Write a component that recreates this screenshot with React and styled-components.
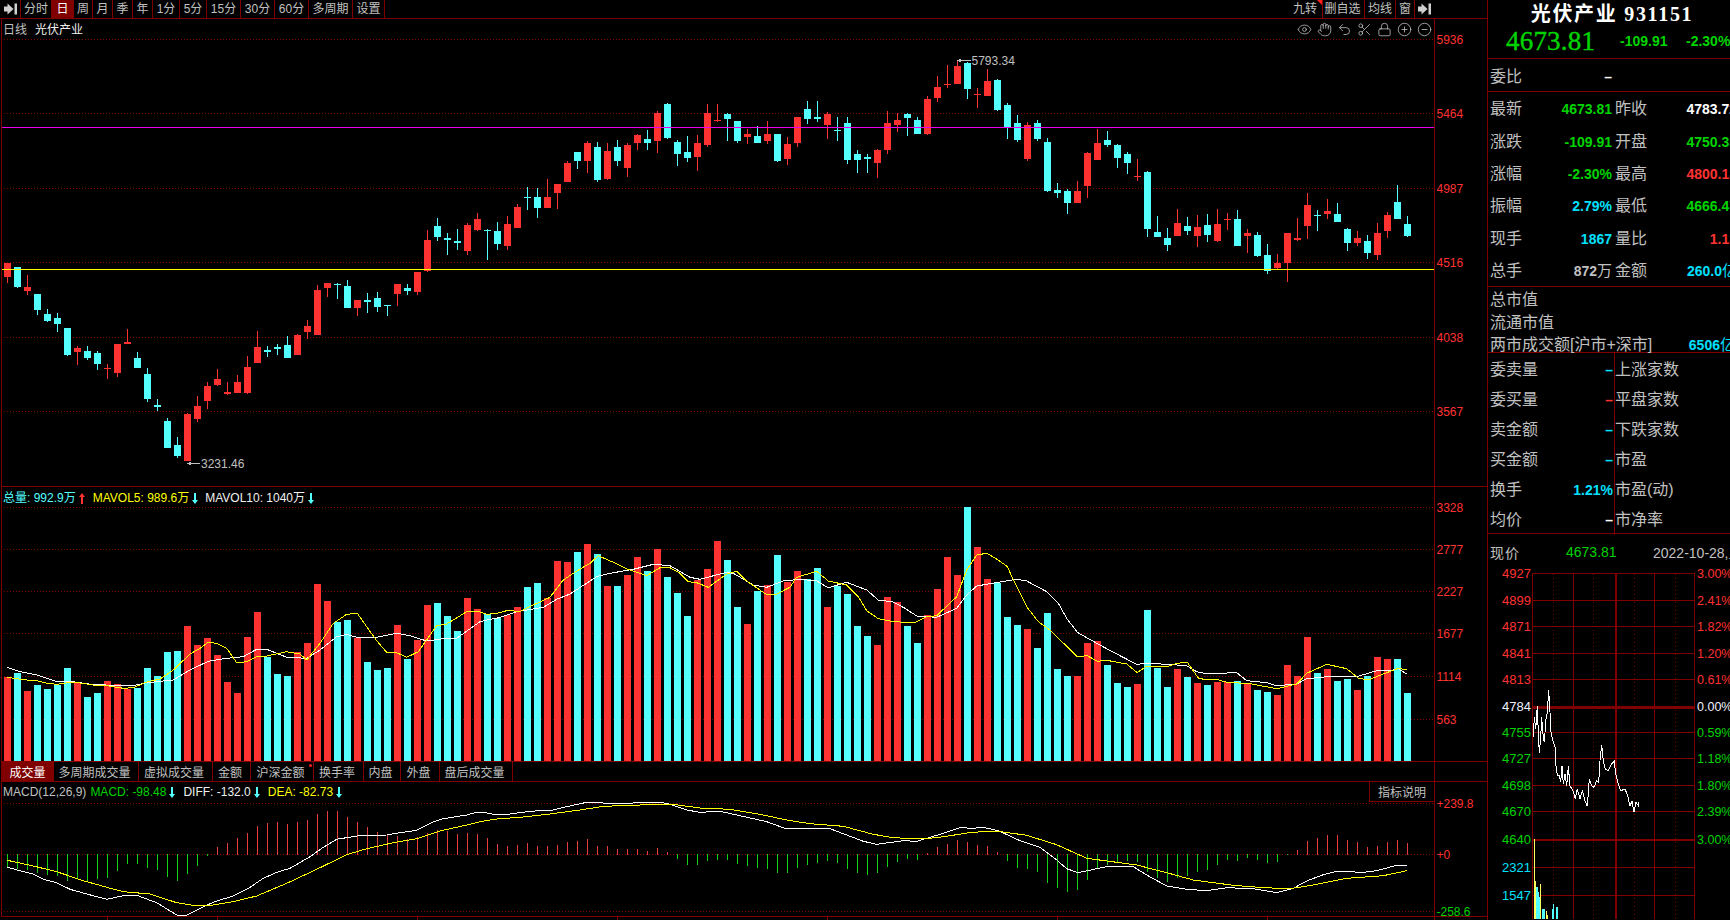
import React from 'react';
import styled, { createGlobalStyle } from 'styled-components';
import { Eye, Hand, Undo2, Scissors, Lock, CirclePlus, CircleMinus } from 'lucide-react';

const FONT = '"Liberation Sans", "Noto Sans CJK SC", sans-serif';
const LINE = '#800000';
const RED = '#ff3232';
const CYAN = '#54ffff';
const GREEN = '#00d400';
const BLUE = '#00e0ff';
const GRAY = '#c0c0c0';

const GlobalStyle = createGlobalStyle`
  html, body { margin: 0; padding: 0; background: #000; overflow: hidden; }
  #root { width: 1730px; height: 920px; }
`;

const Page = styled.div`
  width: 1730px; height: 920px; display: flex; overflow: hidden;
  background: #000; color: ${GRAY}; font-family: ${FONT};
`;
const LeftColumn = styled.div`
  width: 1488px; flex: none; display: flex; flex-direction: column;
  border-right: 1px solid ${LINE}; box-sizing: border-box;
`;
const Toolbar = styled.div`
  height: 19px; flex: none; box-sizing: border-box; display: flex;
  border-bottom: 1px solid ${LINE}; padding-right: 53px;
`;
const ToolGroup = styled.div`display: flex; height: 18px;`;
const ToolSpacer = styled.div`flex: 1;`;
const ToolCell = styled.div`
  position: relative; box-sizing: border-box; width: ${p => p.$w}px; height: 18px; flex: none;
  display: flex; align-items: center; justify-content: center;
  font-size: 12px; line-height: 18px; white-space: nowrap;
  padding-right: ${p => p.$pr || 0}px;
  color: ${p => (p.$active ? '#fff' : GRAY)};
  background: ${p => (p.$active ? LINE : 'transparent')};
  border-right: ${p => (p.$last ? 'none' : `1px solid ${LINE}`)};
`;
const CornerMark = styled.span`
  position: absolute; right: 0; top: 0; width: 0; height: 0;
  border-top: 5px solid #ff2020; border-left: 5px solid transparent;
`;
const Pane = styled.div`
  position: relative; flex: none; height: ${p => p.$h}px; margin-left: 1px;
  border-left: 1px solid ${LINE}; border-bottom: 1px solid ${LINE};
`;
const ChartSvg = styled.svg`display: block; font-family: ${FONT};`;
const AxisText = styled.text`
  font-size: ${p => p.$size || 12}px; fill: ${p => p.$color || RED};
`;
const KlineTitle = styled.div`
  position: absolute; left: 1px; top: 4px; display: flex; gap: 8px;
  font-size: 12px; line-height: 14px;
`;
const TitleName = styled.span`color: #f0f0f0;`;
const IconRow = styled.div`
  position: absolute; right: 53px; top: 3px; display: flex; color: #c4c4c4;
`;
const IconBox = styled.div`
  width: 20px; height: 14px; display: flex; align-items: center; justify-content: center;
`;
const Legend = styled.div`
  position: absolute; left: 1px; top: ${p => p.$top}px; display: flex; align-items: center;
  font-size: 12px; line-height: 14px; white-space: nowrap;
`;
const LegendItem = styled.span`
  color: ${p => p.$color}; display: inline-flex; align-items: center;
  margin-left: ${p => p.$gap || 0}px;
`;
const TrendSvg = styled.svg`margin-left: 3px; flex: none;`;
const TabRow = styled.div`
  height: 20px; flex: none; box-sizing: border-box; display: flex; margin-left: 1px;
  border-left: 1px solid ${LINE}; border-bottom: 1px solid ${LINE};
`;
const Tab = styled.div`
  position: relative; box-sizing: border-box; flex: none; width: ${p => p.$w}px; height: 19px;
  display: flex; align-items: center; justify-content: center; font-size: 12px;
  padding-right: ${p => (p.$active ? 0 : 3)}px;
  color: ${p => (p.$active ? '#fff' : GRAY)};
  background: ${p => (p.$active ? LINE : 'transparent')};
  border-right: 1px solid ${LINE};
`;
const TabDot = styled.span`
  position: absolute; right: 1px; top: 2px; width: 3px; height: 3px; border-radius: 50%; background: #ff2020;
`;
const TabSpacer = styled.div`flex: 1;`;
const AxisStub = styled.div`width: 52px; flex: none; border-left: 1px solid ${LINE};`;
const HelpBox = styled.div`
  position: absolute; right: 52px; top: 0; width: 66px; height: 20px; box-sizing: border-box;
  display: flex; align-items: center; justify-content: center; font-size: 12px;
  border-left: 1px solid ${LINE}; border-bottom: 1px solid ${LINE}; border-right: 1px solid ${LINE}; background: #000;
`;
const TimeAxis = styled.div`height: 3px; flex: none;`;

const RightPanel = styled.div`
  width: 242px; flex: none; display: flex; flex-direction: column; overflow: hidden;
`;
const TitleBlock = styled.div`
  height: 59px; flex: none; box-sizing: border-box; border-bottom: 1px solid ${LINE};
`;
const StockName = styled.div`
  height: 24px; padding-left: 6px; box-sizing: border-box;
  display: flex; justify-content: center; align-items: center; white-space: pre;
  font-family: "Liberation Serif", "Noto Sans CJK SC", serif; font-weight: 700;
  font-size: 20px; letter-spacing: 1.7px; color: #fff;
`;
const QuoteLine = styled.div`
  display: flex; align-items: center; height: 34px; padding-left: 18px; color: ${GREEN};
`;
const BigPrice = styled.span`
  width: 114px; flex: none; font-family: "Liberation Serif", serif; font-size: 27px; letter-spacing: 0.2px;
  -webkit-text-stroke: 0.4px ${GREEN};
`;
const Change = styled.span`
  width: 66px; flex: none; font-size: 14px; font-weight: 700; white-space: nowrap;
`;
const Section = styled.div`
  height: ${p => p.$h}px; flex: none; box-sizing: border-box; border-bottom: 1px solid ${LINE};
  padding-top: ${p => p.$pt || 0}px;
`;
const SplitRow = styled.div`
  display: grid; grid-template-columns: 122px 122px; column-gap: 3px; padding-left: 2px;
  height: ${p => p.$h}px; align-items: center; width: 260px;
`;
const Half = styled.div`display: flex; justify-content: space-between; align-items: center;`;
const Label = styled.span`
  font-size: 16px; line-height: 20px; color: ${GRAY}; white-space: nowrap;
`;
const Value = styled.span`
  font-size: 14px; line-height: 20px; font-weight: 700; color: ${p => p.$color}; white-space: nowrap;
`;
const Unit = styled.span`font-weight: 400; font-size: 15px;`;
const MiscRow = styled.div`
  height: 22.4px; display: flex; align-items: center; justify-content: space-between;
  padding-left: 2px; width: 247px; box-sizing: border-box;
`;
const LowerGrid = styled.div`display: grid; grid-template-columns: 127px 1fr; height: 100%;`;
const LowerCol = styled.div`
  box-sizing: border-box; border-right: ${p => (p.$left ? `1px solid ${LINE}` : 'none')};
  padding: ${p => (p.$left ? '2px 1px 0 2px' : '2px 0 0 0')};
  display: grid; grid-auto-rows: 30px; align-items: center;
`;
const LowerGridFrame = styled(LowerGrid)`height: 180px;`;
const LowerRow = styled.div`display: flex; justify-content: space-between; align-items: center;`;
const Summary = styled.div`
  height: 35px; flex: none; display: flex; align-items: center; white-space: nowrap; font-size: 14px;
  padding-left: 2px;
`;
const SummaryLabel = styled.span`width: 76px; flex: none; letter-spacing: 1px; font-size: 14px;`;
const SummaryPrice = styled.span`width: 87px; flex: none; color: ${GREEN};`;
const SummaryDate = styled.span`color: ${GRAY};`;

/* ---------- data (read off the picture: [colour, body top, body bottom, wick top, wick bottom]) ---------- */
const seg = (off, rows) => rows.map(([c, a, b, d, e]) => ({ c, t: off + a / 3, b: off + b / 3, wt: off + d / 3, wb: off + e / 3 }));
const CANDLES = [
  ...seg(250, [
    ['r',39,81,39,99],['c',51,111,51,114],['r',111,123,75,135],['c',132,180,132,195],['c',192,213,177,216],['c',204,222,189,246],
    ['c',234,315,234,318],['r',294,306,288,345],['c',303,324,288,330],['c',309,342,303,360],['r',354,357,342,387],['r',282,369,282,381],
    ['r',276,282,237,282],['c',324,354,306,354],['c',372,447,354,456],['c',465,471,447,483],['c',513,594,504,594],['c',585,618,561,624],
    ['r',492,633,489,633],['r',468,507,438,516],['r',408,453,396,477],['r',387,405,357,408],['r',426,432,396,435],['r',396,429,375,429],
    ['r',351,429,318,432],['r',291,339,243,339],['c',300,306,288,321],['c',291,297,282,315],['c',285,324,258,324],['r',255,315,252,315],
    ['r',228,246,210,267],['r',120,255,105,255],['r',99,114,99,141],['c',102,105,100,147],['c',108,174,90,174],['r',150,174,150,198],
    ['c',150,156,129,189],['c',144,171,126,186],['c',165,168,165,198],['r',102,132,102,168],['c',114,123,102,135],['r',66,126,66,135],
  ]),
  ...seg(0, [
    ['r',720,813,690,816],['c',678,711,654,723],['c',714,720,699,765],['c',723,729,687,750],['r',675,753,669,765],['r',657,690,639,693],
    ['c',690,693,687,780],['c',693,732,666,750],
  ]),
  ...seg(40, [
    ['r',552,618,528,630],['r',501,564,492,564],['c',471,474,441,510],['c',471,504,444,534],['r',471,504,417,504],['r',432,459,432,507],
    ['r',369,426,363,426],['c',336,363,336,387],['r',309,363,303,399],['c',321,420,306,426],['r',333,417,309,420],['c',321,363,300,378],
    ['r',315,384,309,411],['r',285,309,282,330],['c',297,309,270,330],['r',219,303,213,339],['c',192,294,189,297],['c',306,342,300,378],
    ['c',336,354,288,366],['r',309,351,285,393],['r',219,315,192,321],['r',240,243,192,246],['c',222,237,219,303],['c',243,303,243,309],
    ['r',282,291,267,312],['c',288,309,258,309],['r',282,303,243,312],['c',282,363,282,366],['r',312,357,291,375],['r',231,309,231,321],
    ['c',207,237,183,252],['c',231,237,183,246],['r',222,255,216,297],['c',270,273,231,303],['c',249,360,231,372],['c',342,360,330,399],
    ['c',351,357,342,399],['r',330,369,327,414],['r',249,330,213,342],['r',240,255,219,276],['c',222,234,219,288],['c',240,282,231,282],
    ['r',177,282,168,285],['r',141,174,108,186],['r',132,135,75,144],['r',78,132,60,132],['c',69,147,66,177],['r',162,165,144,204],
    ['r',123,168,87,168],['c',120,210,117,213],
  ]),
  ...seg(60, [
    ['c',135,201,129,237],['c',189,240,165,246],['r',195,297,186,303],['c',189,237,180,243],['c',246,393,234,396],['c',390,399,369,414],
    ['c',393,429,387,462],['r',393,429,363,429],['r',279,378,276,414],['r',249,300,207,300],['c',240,255,213,261],['c',255,294,252,324],
    ['c',282,309,276,342],['r',348,351,297,363],['c',336,507,333,531],['c',516,531,468,531],['c',534,555,504,573],['r',489,528,447,528],
    ['c',498,513,471,525],['r',501,528,465,561],['c',495,525,462,546],['r',492,543,447,546],['r',477,480,459,510],['c',477,558,450,558],
    ['r',519,528,507,579],['c',525,588,516,591],['c',585,633,552,642],['r',609,624,582,627],['r',519,609,519,666],
  ]),
  ...seg(0, [
    ['r',714,720,654,723],['r',615,678,579,717],['c',645,648,630,693],['r',633,642,597,657],['c',642,666,609,666],['c',687,729,684,753],
    ['r',714,729,693,738],['c',723,759,705,777],['r',699,765,669,780],['r',645,693,636,714],['c',606,657,555,657],['c',672,708,648,711],
  ]),
];

const vols = (off, s) => s.trim().split(/\s+/).map(t => ({ c: t[0], t: off + Number(t.slice(1)) / 3 }));
const VOLUMES = [
  ...vols(480, `r591 c579 r633 c615 c627 c615 c564 r609 c651 c639 r603 r612 r627 c624 c564 c588 c516 c513 r438 r495 r474 r525 r606 r639 r471 r396 c531 c582 c588 r516 r489 r312 r363 c426 c420 r474 c546 c570 c564 r435 c537 r480 r375 c369 c408 c453 r354 r387 c402 c415`),
  ...vols(500, `r345 r321 c261 c249 r294 r183 r186 c156 r132 c162 r258 c258 r225 r171 c213 r147 c231 c279 c348 r240 r207 r123 c180 c321 r372 c273 r255 c165 r246 r213 c237 c204 r321 c258 c282 c378 c408 r435 r291 r306 c378 c429 r345 r267 r171 r225 c21 r141 r237 c249`),
  ...vols(500, `c351 c375 r387 c444 c339 c507 c528 r528 r429 r423 c495 c549 c561 r552 c330 c504 c561 r507 c531 r549 c555 r546 r546 c543 r549 c570 c576 r585 r495 r528 r411 c519 r507 c543 c537 r570 c528 r471 r477 c477 c579`),
];

const line = (off0, off1, a) => {
  const out = [];
  for (let i = 0; i < a.length; i += 2) out.push([off0 + a[i] / 3, off1 + a[i + 1] / 3]);
  return out;
};
const toPts = list => list.map(([x, y]) => `${x.toFixed(1)},${y.toFixed(1)}`).join(' ');

const MAV5 = toPts([
  ...line(0, 480, [20,592,80,600,110,602,140,610,170,613,220,606,280,615,310,615,340,620,370,625,400,623,440,606,480,597,520,570,570,522,600,505,625,487,650,490,680,505,710,548,740,545,770,530,800,528,860,515,900,522,920,540,960,490,1000,430,1040,403,1072,400,1100,440,1130,482,1160,517,1190,518,1220,532,1255,515,1310,437,1340,432,1400,395,1430,393,1460,403,1490,400]),
  ...line(500, 500, [25,331,60,335,100,315,150,292,190,240,230,213,270,190,295,167,340,187,380,207,440,227,480,203,510,203,540,220,565,245,590,248,625,262,680,222,710,214,740,243,800,284,830,282,870,262,890,232,950,214,985,243,1040,255,1075,290,1100,332,1135,356,1180,365,1245,368,1280,350,1310,347,1370,290,1400,210,1430,165,1460,160,1495,180]),
  ...line(1000, 500, [22,200,45,250,80,320,115,365,150,390,232,470,262,467,292,484,320,481,380,492,412,518,440,498,500,500,530,490,562,487,595,534,620,540,650,538,680,547,750,551,830,566,890,552,920,520,980,493,1040,506,1075,534,1105,540,1150,522,1195,505,1220,510]),
]);
const MAV10 = toPts([
  ...line(0, 480, [20,562,60,575,110,585,170,605,220,605,280,614,400,617,440,608,520,600,570,570,625,544,680,535,730,530,770,508,800,508,860,532,920,535,960,510,1010,470,1040,463,1070,472,1130,472,1190,460,1230,467,1280,483,1340,475,1370,475,1440,425,1470,418,1490,415]),
  ...line(500, 500, [50,335,130,322,170,298,210,282,290,230,330,220,400,208,460,193,510,197,570,232,600,238,680,217,700,220,760,255,800,262,850,243,900,238,950,243,985,263,1040,247,1100,270,1135,300,1180,306,1215,325,1250,348,1310,352,1370,325,1400,285,1430,258,1495,247]),
  ...line(1000, 500, [50,238,80,243,140,275,175,310,200,355,232,397,290,430,350,462,410,493,440,490,500,493,560,497,590,515,620,521,710,518,740,542,800,548,830,557,890,552,920,536,980,530,1070,530,1130,512,1170,512,1195,506,1220,522]),
]);
const DIFF = toPts([
  ...line(0, 750, [22,352,60,362,100,372,130,388,170,398,210,418,260,432,320,448,380,435,410,436,470,458,530,495,560,495,610,470,650,453,700,438,750,412,790,385,830,367,870,355,930,320,970,292,1010,268,1070,258,1160,255,1200,248,1250,241,1300,215,1330,206,1400,195,1430,187,1450,187,1490,195]),
  ...line(500, 500, [30,942,90,934,160,930,200,920,260,907,330,910,370,910,470,907,500,910,560,930,600,937,660,934,720,947,800,965,860,987,990,986,1040,1005,1090,1024,1130,1033,1210,1022,1250,1024,1320,1003,1380,983,1420,985,1450,982,1495,992]),
  ...line(1000, 500, [60,1022,120,1042,170,1080,200,1106,235,1118,290,1106,320,1100,400,1100,440,1125,500,1158,560,1168,620,1172,680,1163,760,1166,830,1178,880,1165,920,1143,970,1124,1010,1114,1090,1117,1130,1112,1190,1096,1220,1096]),
]);
const DEA = toPts([
  ...line(0, 750, [22,331,100,348,170,365,250,392,320,412,370,425,450,432,530,458,580,466,620,468,700,455,770,438,860,400,950,358,1040,314,1100,296,1180,278,1250,266,1320,243,1400,225,1440,215,1490,207]),
  ...line(500, 500, [60,952,150,942,240,930,310,919,420,915,510,912,600,924,690,928,780,943,860,960,930,971,1030,979,1120,1003,1180,1013,1270,1017,1340,1009,1400,999,1460,994,1495,994]),
  ...line(1000, 500, [80,1006,170,1034,260,1075,350,1087,410,1095,500,1118,580,1140,700,1156,790,1163,870,1166,940,1155,1040,1135,1150,1127,1220,1112]),
]);
const hist = (off, a) => a.map(v => off + v / 3);
const MACD_BARS = [
  ...hist(750, [355,358,360,368,375,378,392,388,392,386,384,362,342,342,354,360,380,392,372,348,317,292,279,264,249,228,219,216,222,216,210,192,183,183,201,216,232,246,252,258,267,262,250,240,243,252,249,252,264,282]),
  ...hist(500, [1038,1035,1029,1038,1038,1035,1026,1023,1017,1038,1038,1047,1047,1047,1053,1044,1056,1077,1095,1095,1083,1080,1080,1092,1098,1104,1107,1119,1119,1104,1095,1089,1083,1089,1107,1119,1125,1119,1101,1086,1077,1080,1059,1041,1032,1020,1026,1035,1038,1056]),
  ...hist(500, [1083,1104,1107,1116,1149,1164,1176,1170,1140,1104,1095,1086,1083,1086,1116,1134,1146,1134,1128,1116,1110,1095,1080,1083,1074,1080,1089,1086,1066,1050,1023,1014,1005,1005,1020,1026,1041,1038,1026,1020,1029]),
];
const ZERO = 854;

const TICK_PRICE = toPts(line(1470, 570, [190,505,193,445,197,480,202,412,205,490,208,552,212,505,215,445,218,490,223,520,228,450,232,430,236,363,240,430,243,490,250,520,255,535,258,590,262,618,268,620,272,640,276,590,280,645,285,615,290,650,295,592,300,650,310,668,316,690,322,660,330,690,337,665,345,695,352,712,358,630,365,650,372,655,380,635,386,640,390,575,395,528,400,575,406,600,415,605,425,585,433,577,437,615,445,645,452,665,465,660,473,680,480,712,486,695,492,730,498,700,506,712,506,698]));
const TICK_BARS = [
  [192,810,'y',2],[195,935,'y',2],[198,955,'c',5],[204,968,'c',4],[208,985,'c',3],[211,945,'y',1],[215,1020,'c',4],[219,1020,'c',5],[228,1025,'y',1],[232,1038,'y',2],[246,1020,'c',4],[250,1005,'c',4],[258,1015,'c',5],
];

const PRICE_AXIS = [[39,'5936'],[113.6,'5464'],[188.5,'4987'],[262.5,'4516'],[337,'4038'],[411,'3567']];
const VOL_AXIS = [[507,'3328'],[549,'2777'],[591,'2227'],[633,'1677'],[676,'1114'],[719,'563']];
const TIME_ROWS = [
  [574.7,'4927','3.00%',RED],[601,'4899','2.41%',RED],[627.5,'4871','1.82%',RED],[654.5,'4841','1.20%',RED],[680.5,'4813','0.61%',RED],
  [707,'4784','0.00%','#f0f0ff'],[733.5,'4755','0.59%',GREEN],[759.5,'4727','1.18%',GREEN],[786.5,'4698','1.80%',GREEN],[812.5,'4670','2.39%',GREEN],
  [840,'4640','3.00%',GREEN],[868.5,'2321','',BLUE],[896.5,'1547','',BLUE],
];

/* ---------- small drawings ---------- */
const StepArrow = () => (
  <svg width="13" height="12" viewBox="0 0 13 12">
    <path d="M0 3.5H3.5V0.5L9.5 6L3.5 11.5V8.5H0Z M10.5 0.5H13V11.5H10.5Z" fill="#cfcfcf" />
  </svg>
);
const Trend = ({ up, color }) => (
  <TrendSvg width="6" height="11" viewBox="0 0 6 11">
    <path d={up ? 'M3 0L6 4H4V11H2V4H0Z' : 'M3 11L6 7H4V0H2V7H0Z'} fill={color} />
  </TrendSvg>
);
const Dotted = ({ y, x1 = 4, x2 = 1434 }) => (
  <line x1={x1} x2={x2} y1={y + 0.5} y2={y + 0.5} stroke={LINE} strokeDasharray="1 2" />
);
const Sep = ({ x }) => <line x1={x + 0.5} x2={x + 0.5} y1="0" y2="920" stroke={LINE} />;

const TOOL_LEFT = [['分时',31],['日',22,true],['周',19],['月',20],['季',20],['年',20],['1分',27],['5分',27],['15分',34],['30分',34],['60分',34],['多周期',44],['设置',32]];
const TOOL_RIGHT = [['九转',31,false,true,4],['删自选',42,false,false,2],['均线',31],['窗',19]];
const TOOL_ICONS = [Eye, Hand, Undo2, Scissors, Lock, CirclePlus, CircleMinus];
const TABS = [['成交量',52,true],['多周期成交量',85],['虚拟成交量',74],['金额',38],['沪深金额',63,false,true],['换手率',50],['内盘',37],['外盘',39],['盘后成交量',73]];
const STATS = [
  ['最新','4673.81',GREEN,'昨收','4783.72','#fff'],
  ['涨跌','-109.91',GREEN,'开盘','4750.35',GREEN],
  ['涨幅','-2.30%',GREEN,'最高','4800.18',RED],
  ['振幅','2.79%',BLUE,'最低','4666.47',GREEN],
  ['现手','1867',BLUE,'量比','1.13',RED],
  ['总手','872','#c0c0c0','金额','260.0',BLUE],
];
const LOWER_LEFT = [['委卖量','–',BLUE],['委买量','–',RED],['卖金额','–',BLUE],['买金额','–',BLUE],['换手','1.21%',BLUE],['均价','–','#fff']];
const LOWER_RIGHT = ['上涨家数','平盘家数','下跌家数','市盈','市盈(动)','市净率'];

const KlineChart = () => (
  <ChartSvg width="1485" height="467" viewBox="2 19 1485 467">
    <g shapeRendering="crispEdges">
      {PRICE_AXIS.map(([y]) => <Dotted key={y} y={Math.floor(y)} />)}
      <Sep x={1434} />
      {CANDLES.map((k, i) => {
        const x = 4 + 10 * i;
        const fill = k.c === 'r' ? RED : CYAN;
        return (
          <g key={i} fill={fill}>
            <rect x={x + 3} y={Math.round(k.wt)} width="1" height={Math.max(1, Math.round(k.wb) - Math.round(k.wt))} />
            <rect x={x} y={Math.round(k.t)} width="7" height={Math.max(1, Math.round(k.b) - Math.round(k.t))} />
          </g>
        );
      })}
      <line x1="2" x2="1434" y1="127.5" y2="127.5" stroke="#f000f0" />
      <line x1="2" x2="1434" y1="269.5" y2="269.5" stroke="#ffff00" />
      <line x1="959" x2="971" y1="60.5" y2="60.5" stroke={GRAY} />
      <path d="M957 60.5L961 58.5V62.5Z" fill={GRAY} />
      <line x1="189" x2="200" y1="463.5" y2="463.5" stroke={GRAY} />
      <path d="M187 463.5L191 461.5V465.5Z" fill={GRAY} />
    </g>
    <AxisText x="971.5" y="64.5" $color={GRAY}>5793.34</AxisText>
    <AxisText x="201" y="467.5" $color={GRAY}>3231.46</AxisText>
    {PRICE_AXIS.map(([y, t]) => <AxisText key={t} x="1436.5" y={y + 4.5}>{t}</AxisText>)}
  </ChartSvg>
);

const VolumeChart = () => (
  <ChartSvg width="1485" height="274" viewBox="2 487 1485 274">
    <g shapeRendering="crispEdges">
      {VOL_AXIS.map(([y]) => <Dotted key={y} y={y} />)}
      <Sep x={1434} />
      {VOLUMES.map((v, i) => (
        <rect key={i} x={4 + 10 * i} y={Math.round(v.t)} width="7" height={761 - Math.round(v.t)} fill={v.c === 'r' ? RED : CYAN} />
      ))}
      <polyline points={MAV10} fill="none" stroke="#ffffff" />
      <polyline points={MAV5} fill="none" stroke="#ffff00" />
    </g>
    {VOL_AXIS.map(([y, t]) => <AxisText key={t} x="1436.5" y={y + 4.5}>{t}</AxisText>)}
  </ChartSvg>
);

const MacdChart = () => (
  <ChartSvg width="1485" height="134" viewBox="2 782 1485 134">
    <g shapeRendering="crispEdges">
      <Dotted y={803} />
      <Dotted y={854} />
      <Dotted y={911} />
      <Sep x={1434} />
      {MACD_BARS.map((y, i) => {
        const top = Math.round(Math.min(y, ZERO));
        const bottom = Math.round(Math.max(y, ZERO + 1));
        return <rect key={i} x={7 + 10 * i} y={top} width="1" height={bottom - top} fill={y < ZERO ? '#e83c3c' : '#14d214'} />;
      })}
      <polyline points={DIFF} fill="none" stroke="#ffffff" />
      <polyline points={DEA} fill="none" stroke="#ffff00" />
    </g>
    <AxisText x="1436.5" y="807.5" $size={12}>+239.8</AxisText>
    <AxisText x="1436.5" y="859" $size={12}>+0</AxisText>
    <AxisText x="1436.5" y="916" $color={GREEN} $size={12}>-258.6</AxisText>
  </ChartSvg>
);

const TimeChart = () => (
  <ChartSvg width="242" height="350" viewBox="1488 570 242 350">
    <g shapeRendering="crispEdges">
      {[1553, 1593, 1634, 1675].map(x => (
        <line key={x} x1={x + 0.5} x2={x + 0.5} y1="575" y2="920" stroke={LINE} strokeDasharray="1 3" />
      ))}
      {TIME_ROWS.map(([y]) => {
        const thick = y === 707 ? 3 : y === 840 ? 2 : 1;
        return <rect key={y} x="1532" y={Math.floor(y)} width="163" height={thick} fill={LINE} />;
      })}
      {[[1532,1],[1573,1],[1615,2],[1654,1],[1694,1]].map(([x, w]) => (
        <rect key={x} x={x} y="574" width={w} height="346" fill={LINE} />
      ))}
      <polyline points={TICK_PRICE} fill="none" stroke="#ffffff" />
      {TICK_BARS.map(([zx, zy, c, w]) => (
        <rect key={zx} x={Math.round(1470 + zx / 3)} y={Math.round(570 + zy / 3)} width={Math.max(1, Math.round(w / 3))} height={920 - Math.round(570 + zy / 3)} fill={c === 'y' ? '#ffff60' : CYAN} />
      ))}
    </g>
    {TIME_ROWS.map(([y, l, r, c]) => (
      <g key={y}>
        <AxisText x="1531" y={y + 4.5} textAnchor="end" $color={c} $size={13}>{l}</AxisText>
        {r && <AxisText x="1697" y={y + 4.5} $color={c} $size={12.5}>{r}</AxisText>}
      </g>
    ))}
  </ChartSvg>
);

const Ticks = () => (
  <ChartSvg width="1487" height="3" viewBox="0 917 1487 3">
    <g shapeRendering="crispEdges">
      {[107, 217, 417, 617, 827, 1057, 1267, 1434].map(x => (
        <line key={x} x1={x + 0.5} x2={x + 0.5} y1="917" y2="920" stroke={LINE} />
      ))}
    </g>
  </ChartSvg>
);

export default function App() {
  return (
    <>
      <GlobalStyle />
      <Page>
        <LeftColumn>
          <Toolbar>
            <ToolGroup>
              <ToolCell $w={21}><StepArrow /></ToolCell>
              {TOOL_LEFT.map(([t, w, a]) => <ToolCell key={t} $w={w} $active={a}>{t}</ToolCell>)}
            </ToolGroup>
            <ToolSpacer />
            <ToolGroup>
              {TOOL_RIGHT.map(([t, w, a, mark, pr]) => (
                <ToolCell key={t} $w={w} $active={a} $pr={pr}>{t}{mark && <CornerMark />}</ToolCell>
              ))}
              <ToolCell $w={19} $last><StepArrow /></ToolCell>
            </ToolGroup>
          </Toolbar>

          <Pane $h={467}>
            <KlineChart />
            <KlineTitle><span>日线</span><TitleName>光伏产业</TitleName></KlineTitle>
            <IconRow>
              {TOOL_ICONS.map((Icon, i) => (
                <IconBox key={i}><Icon size={15} strokeWidth={1.25} /></IconBox>
              ))}
            </IconRow>
          </Pane>

          <Pane $h={274}>
            <VolumeChart />
            <Legend $top={4}>
              <LegendItem $color={CYAN}>总量: 992.9万<Trend up color={RED} /></LegendItem>
              <LegendItem $color="#ffff00" $gap={8}>MAVOL5: 989.6万<Trend color={CYAN} /></LegendItem>
              <LegendItem $color="#f0f0f0" $gap={7}>MAVOL10: 1040万<Trend color={CYAN} /></LegendItem>
            </Legend>
          </Pane>

          <TabRow>
            {TABS.map(([t, w, a, dot]) => (
              <Tab key={t} $w={w} $active={a}>{t}{dot && <TabDot />}</Tab>
            ))}
            <TabSpacer />
            <AxisStub />
          </TabRow>

          <Pane $h={134}>
            <MacdChart />
            <Legend $top={3}>
              <LegendItem $color={GRAY}>MACD(12,26,9)</LegendItem>
              <LegendItem $color={GREEN} $gap={4}>MACD: -98.48<Trend color={CYAN} /></LegendItem>
              <LegendItem $color="#f0f0f0" $gap={8}>DIFF: -132.0<Trend color={CYAN} /></LegendItem>
              <LegendItem $color="#ffff00" $gap={8}>DEA: -82.73<Trend color={CYAN} /></LegendItem>
            </Legend>
            <HelpBox>指标说明</HelpBox>
          </Pane>

          <TimeAxis><Ticks /></TimeAxis>
        </LeftColumn>

        <RightPanel>
          <TitleBlock>
            <StockName>光伏产业 931151</StockName>
            <QuoteLine>
              <BigPrice>4673.81</BigPrice>
              <Change>-109.91</Change>
              <Change>-2.30%</Change>
            </QuoteLine>
          </TitleBlock>

          <Section $h={33} $pt={2}>
            <SplitRow $h={31}>
              <Half><Label>委比</Label><Value $color="#f0f0f0">–</Value></Half>
            </SplitRow>
          </Section>

          <Section $h={195} $pt={1}>
            {STATS.map(([l1, v1, c1, l2, v2, c2], i) => (
              <SplitRow key={l1} $h={32.4}>
                <Half><Label>{l1}</Label><Value $color={c1}>{v1}{i === 5 && <Unit>万</Unit>}</Value></Half>
                <Half><Label>{l2}</Label><Value $color={c2}>{v2}{i === 5 && <Unit>亿</Unit>}</Value></Half>
              </SplitRow>
            ))}
          </Section>

          <Section $h={66} $pt={2}>
            <MiscRow><Label>总市值</Label></MiscRow>
            <MiscRow><Label>流通市值</Label></MiscRow>
            <MiscRow><Label>两市成交额[沪市+深市]</Label><Value $color={BLUE}>6506<Unit>亿</Unit></Value></MiscRow>
          </Section>

          <Section $h={181}>
            <LowerGridFrame>
              <LowerCol $left>
                {LOWER_LEFT.map(([l, v, c]) => (
                  <LowerRow key={l}><Label>{l}</Label><Value $color={c}>{v}</Value></LowerRow>
                ))}
              </LowerCol>
              <LowerCol>
                {LOWER_RIGHT.map(l => <LowerRow key={l}><Label>{l}</Label></LowerRow>)}
              </LowerCol>
            </LowerGridFrame>
          </Section>

          <Summary>
            <SummaryLabel>现价</SummaryLabel>
            <SummaryPrice>4673.81</SummaryPrice>
            <SummaryDate>2022-10-28,五</SummaryDate>
          </Summary>
          <TimeChart />
        </RightPanel>
      </Page>
    </>
  );
}
